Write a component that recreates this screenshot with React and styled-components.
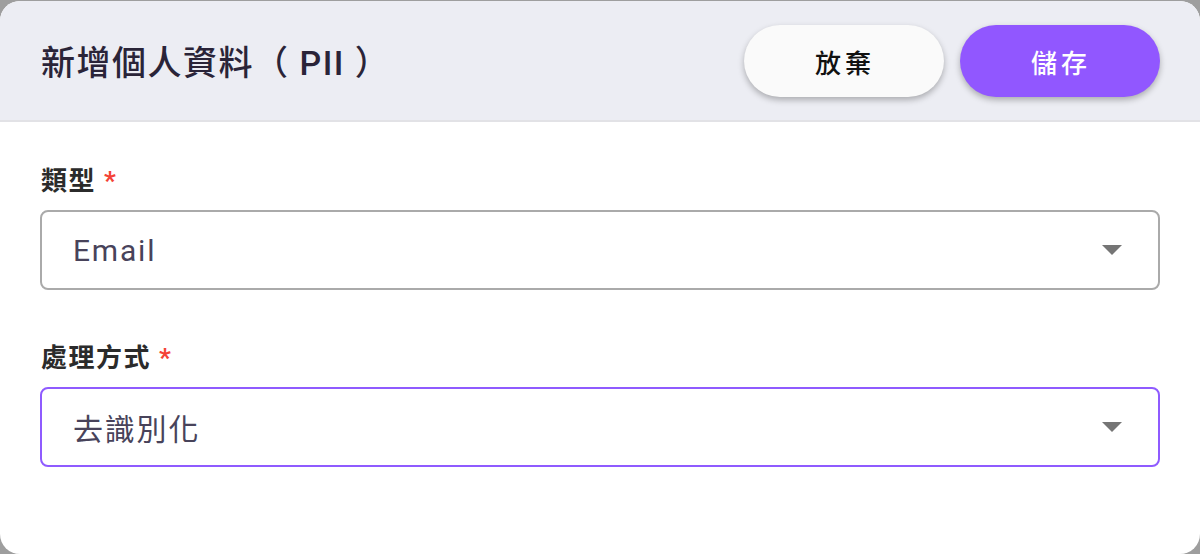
import React from "react";
import styled, { createGlobalStyle } from "styled-components";

const GlobalStyle = createGlobalStyle`
  html, body {
    margin: 0;
    padding: 0;
    background: #9e9e9e;
  }
  body {
    padding-top: 1px;
    font-family: Roboto, "Noto Sans CJK TC", sans-serif;
  }
  * { box-sizing: border-box; }
`;

const Dialog = styled.div`
  width: 1200px;
  height: 553px;
  background: #ffffff;
  border-radius: 20px;
  overflow: hidden;
  display: flex;
  flex-direction: column;
`;

const Header = styled.div`
  height: 121px;
  flex: none;
  background: #ecedf3;
  border-bottom: 2px solid #e2e2e6;
  display: flex;
  align-items: center;
  justify-content: space-between;
  padding: 0 40px 0 41px;
`;

const Title = styled.h1`
  margin: 0;
  font-size: 34px;
  font-weight: 500;
  letter-spacing: 1.5px;
  color: #2a2438;
`;

const Actions = styled.div`
  display: flex;
  gap: 16px;
  margin-top: 1px;
`;

const Button = styled.button`
  width: 200px;
  height: 72px;
  border: none;
  border-radius: 36px;
  font-family: inherit;
  font-size: 26px;
  font-weight: 500;
  letter-spacing: 4px;
  padding-left: 8px;
  cursor: pointer;
  background: ${(p) => (p.$primary ? "#9157ff" : "#fafafa")};
  color: ${(p) => (p.$primary ? "#ffffff" : "#111111")};
  box-shadow: 0 3px 6px rgba(0, 0, 0, 0.28);
`;

const Body = styled.div`
  padding: 43px 40px 0 40px;
  display: flex;
  flex-direction: column;
`;

const Field = styled.div`
  display: flex;
  flex-direction: column;
  margin-bottom: 52px;
`;

const Label = styled.label`
  font-size: 26px;
  font-weight: 700;
  letter-spacing: 1.5px;
  color: #2b2b2b;
  margin: 0 0 13px 1px;
  line-height: 32px;
`;

const Required = styled.span`
  color: #f44336;
  margin-left: 8px;
`;

const Select = styled.div`
  height: 80px;
  border: 2px solid ${(p) => (p.$focused ? "#8f5bff" : "#aaaaaa")};
  border-radius: 8px;
  display: flex;
  align-items: center;
  justify-content: space-between;
  padding: 0 36px 0 31px;
`;

const Value = styled.span`
  font-size: 30px;
  color: #48435a;
  letter-spacing: 1.8px;
`;

const Caret = () => (
  <svg width="20" height="10" viewBox="0 0 20 10">
    <path d="M0 0 L20 0 L10 10 Z" fill="#757575" />
  </svg>
);

export default function App() {
  return (
    <>
      <GlobalStyle />
      <Dialog>
        <Header>
          <Title>新增個人資料（ PII ）</Title>
          <Actions>
            <Button>放棄</Button>
            <Button $primary>儲存</Button>
          </Actions>
        </Header>
        <Body>
          <Field>
            <Label>
              類型<Required>*</Required>
            </Label>
            <Select>
              <Value>Email</Value>
              <Caret />
            </Select>
          </Field>
          <Field>
            <Label>
              處理方式<Required>*</Required>
            </Label>
            <Select $focused>
              <Value>去識別化</Value>
              <Caret />
            </Select>
          </Field>
        </Body>
      </Dialog>
    </>
  );
}
